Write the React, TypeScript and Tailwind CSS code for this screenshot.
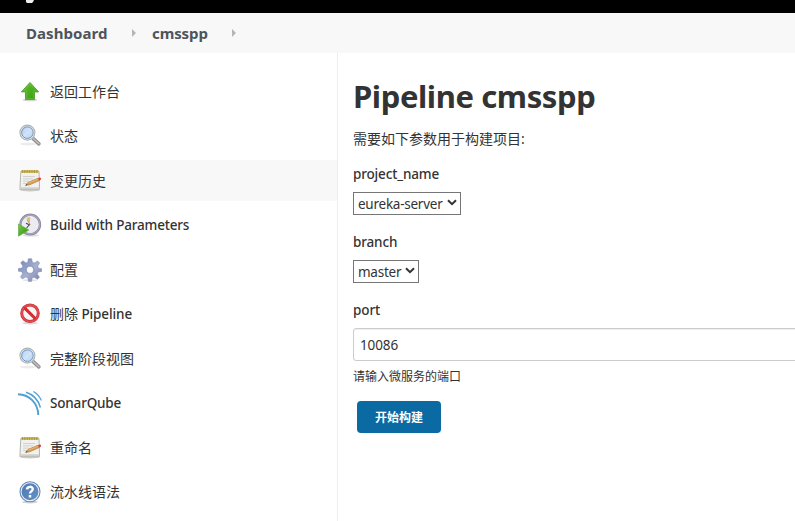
import React from "react";

function UpIcon() {
  return (
    <svg width="24" height="24" viewBox="0 0 24 24">
      <defs>
        <linearGradient id="up" x1="0" y1="0" x2="1" y2="1">
          <stop offset="0" stopColor="#6cc236" />
          <stop offset="1" stopColor="#2f9a08" />
        </linearGradient>
      </defs>
      <ellipse cx="12" cy="20" rx="7.5" ry="1.3" fill="#d4d4d4" />
      <path d="M12 2.5 20.6 11.9h-4.1v7.6h-9v-7.6H3.4Z" fill="url(#up)" stroke="#5aa438" strokeWidth="1" strokeLinejoin="round" />
      <path d="M12 4 18 10.8h-2.7v7.7H8.7v-7.7H5.7Z" fill="none" stroke="#91d864" strokeWidth=".6" opacity=".5" />
    </svg>
  );
}

function SearchIcon() {
  return (
    <svg width="24" height="24" viewBox="0 0 24 24">
      <defs>
        <linearGradient id="lens" x1="0" y1="0" x2="1" y2="1">
          <stop offset="0" stopColor="#a2c3ea" />
          <stop offset=".5" stopColor="#d2e4f7" />
          <stop offset="1" stopColor="#b3d1f0" />
        </linearGradient>
      </defs>
      <ellipse cx="10" cy="20" rx="8" ry="1.5" fill="#ececec" />
      <path d="m15.2 14.7 5.7 5.2" stroke="#8d8d8d" strokeWidth="3.6" strokeLinecap="round" />
      <path d="m15.2 14.5 5.7 5.2" stroke="#c1c1c1" strokeWidth="1.5" strokeLinecap="round" />
      <circle cx="9.4" cy="8.6" r="7.5" fill="#eeeeec" stroke="#b2b4b2" strokeWidth="1.1" />
      <circle cx="9.4" cy="8.6" r="5.8" fill="url(#lens)" stroke="#6c94c8" strokeWidth="1" />
      <path d="M5.2 7.8c.8-3 4-4.6 7-3-3.2.2-4.7 2-7 3Z" fill="#dbe9f8" opacity=".6" />
    </svg>
  );
}

function NotepadIcon() {
  return (
    <svg width="24" height="24" viewBox="0 0 24 24">
      <ellipse cx="12" cy="21.2" rx="9.5" ry="1.3" fill="#cccccc" />
      <path d="M2.8 2.5h18.2l.6 18.1H1.9Z" fill="#f1f1ef" stroke="#b4b4b0" strokeWidth="1" strokeLinejoin="round" />
      <path d="M2.4 18.2h18.8l.1 2H2.3Z" fill="#cfcfcc" />
      <path d="M3.5 1.2h17v2.6h-17Z" fill="#c9b44a" />
      <path d="M4.4 1v3M6.8 1v3M9.2 1v3M11.6 1v3M14 1v3M16.4 1v3M18.8 1v3" stroke="#a18d35" strokeWidth=".8" />
      <path d="M5 7.5h12M5 9.8h10M5 12.1h6M5 14.4h4" stroke="#c9c9c6" strokeWidth=".8" />
      <path d="m7.5 16.4 2.5-3 10-4.2 1.2 2.4-9.5 4.2Z" fill="#dc9b4a" stroke="#a2723a" strokeWidth=".6" />
      <path d="m10.7 14.1 9.6-4" stroke="#efbd78" strokeWidth=".8" />
      <path d="m7.5 16.4 1.2-1.5.9 1.1Z" fill="#444444" />
      <path d="m20 9.2 1.7-.7c1.4-.1 1.9 1.6.8 2.4l-1.4.7Z" fill="#dd4434" />
    </svg>
  );
}

function ClockIcon() {
  return (
    <svg width="24" height="24" viewBox="0 0 24 24">
      <defs>
        <linearGradient id="play" x1="0" y1="0" x2="1" y2="1">
          <stop offset="0" stopColor="#7bcb48" />
          <stop offset="1" stopColor="#239006" />
        </linearGradient>
      </defs>
      <ellipse cx="13" cy="22.4" rx="8" ry="1.2" fill="#dddddd" />
      <circle cx="12.2" cy="11.5" r="9.8" fill="#ecebef" stroke="#8d8ba3" strokeWidth="2.3" />
      <circle cx="12.2" cy="11.5" r="9.6" fill="none" stroke="#b3b1c6" strokeWidth=".8" />
      <path d="M11.8 10.6 8.3 5.5c1.2-1.1 3-1.3 3.9-1.1Z" fill="#dec177" />
      <path d="m8 10.2 3.4 1.6L8.6 15" fill="none" stroke="#44474b" strokeWidth="1.1" />
      <path d="m9.3 7 2.9 4.8" stroke="#a48e55" strokeWidth=".8" />
      <path d="M.5 11 10.8 17 .5 23.2Z" fill="url(#play)" stroke="#65a94a" strokeWidth=".7" />
    </svg>
  );
}

function GearIcon() {
  return (
    <svg width="24" height="24" viewBox="0 0 24 24">
      <defs>
        <linearGradient id="gear" x1="0" y1="0" x2="1" y2="1">
          <stop offset="0" stopColor="#6d82b5" />
          <stop offset=".55" stopColor="#a8b1d1" />
          <stop offset="1" stopColor="#7479a4" />
        </linearGradient>
      </defs>
      <ellipse cx="12" cy="22.3" rx="7" ry="1" fill="#e2e2e2" />
      <path fillRule="evenodd" d="M10.3.7h3.4l.7 3.6 2 .8 3.2-2.2 2.1 2.2-2 3.1.8 2 3.2.5v2.7l-3.5.6-.9 2 2.2 3.3-2.2 2-3.2-2.1-1.9.8-.7 3.4h-3l-.7-3.6-2-.8L4.5 21l-2-2.1 2.1-3.2-.8-1.9-3.5-.6v-2.6L4 10l.8-2L2.7 4.8l2.2-2.1L8 4.9l1.8-.8ZM12 8.2a3.6 3.6 0 1 0 0 7.2 3.6 3.6 0 0 0 0-7.2Z" fill="url(#gear)" stroke="#8089b1" strokeWidth=".5" />
      <circle cx="12" cy="11.8" r="4.2" fill="none" stroke="#8493bd" strokeWidth=".8" />
    </svg>
  );
}

function StopIcon() {
  return (
    <svg width="24" height="24" viewBox="0 0 24 24">
      <ellipse cx="12" cy="21.1" rx="8" ry="1.3" fill="#d8d8d8" />
      <circle cx="12" cy="11.3" r="8.3" fill="#f6f6f5" stroke="#cb3439" strokeWidth="3" />
      <path d="m6.3 5.6 11.4 11.4" stroke="#cf2027" strokeWidth="3" />
      <circle cx="12" cy="11.3" r="8.3" fill="none" stroke="#e04b4f" strokeWidth="1.8" />
      <path d="m6 5.3 12 12" stroke="#de3034" strokeWidth="1.6" />
    </svg>
  );
}

function SonarIcon() {
  return (
    <svg width="24" height="24" viewBox="0 0 24 24" fill="none" stroke="#4f9fd3">
      <path d="M0 3.2C11 3.3 20 12 20.3 24" strokeWidth="1.9" />
      <path d="M8 1.2C14.5 3 20.4 8.8 22.4 16.5" strokeWidth="1.5" />
      <path d="M15.4.5c3.3 1.9 6.2 4.9 8 8.9" strokeWidth="1.2" />
    </svg>
  );
}

function HelpIcon() {
  return (
    <svg width="24" height="24" viewBox="0 0 24 24">
      <defs>
        <linearGradient id="help" x1="0" y1="0" x2="1" y2="1">
          <stop offset="0" stopColor="#4f7ab3" />
          <stop offset="1" stopColor="#6590c4" />
        </linearGradient>
      </defs>
      <ellipse cx="12" cy="22" rx="8" ry="1.4" fill="#d4d4d4" />
      <circle cx="12" cy="11.8" r="10" fill="#f5f7fa" stroke="#6388b8" strokeWidth="1.1" />
      <circle cx="12" cy="11.8" r="8.5" fill="url(#help)" />
      <path d="M9 9.4C9.2 6 15 6 14.7 9.2c-.1 2.2-2.7 2.1-2.7 4.2M12 15.1v2.3" fill="none" stroke="#ffffff" strokeWidth="2.4" />
    </svg>
  );
}

const tasks = [
  { label: "返回工作台", icon: UpIcon },
  { label: "状态", icon: SearchIcon },
  { label: "变更历史", icon: NotepadIcon, active: true },
  { label: "Build with Parameters", icon: ClockIcon, latin: true },
  { label: "配置", icon: GearIcon },
  { label: "删除", suffix: "Pipeline", icon: StopIcon },
  { label: "完整阶段视图", icon: SearchIcon },
  { label: "SonarQube", icon: SonarIcon, latin: true },
  { label: "重命名", icon: NotepadIcon },
  { label: "流水线语法", icon: HelpIcon },
];

function Crumb() {
  return (
    <svg className="shrink-0" width="4" height="8" viewBox="0 0 4 8">
      <path d="M0 0 4 4 0 8Z" fill="#b5b5b5" />
    </svg>
  );
}

function Select({ value, className }: { value: string; className: string }) {
  return (
    <button className={`flex h-[23px] items-center justify-between border border-[#767676] bg-white pl-1 pr-[3px] ${className}`}>
      <span className="whitespace-nowrap pt-px text-[13.5px] leading-5 tracking-[-0.25px]">{value}</span>
      <svg width="10" height="7" viewBox="0 0 10 7" className="mb-0.5 shrink-0">
        <path d="m1 1.2 4 4 4-4" fill="none" stroke="#333333" strokeWidth="2" />
      </svg>
    </button>
  );
}

export default function App() {
  return (
    <div className="flex h-[521px] w-[795px] flex-col overflow-hidden bg-white font-['Noto_Sans','Noto_Sans_CJK_SC',sans-serif] text-sm text-[#333333]">
      <header className="h-[13px] shrink-0 bg-black pl-[26px]">
        <svg width="8" height="4" viewBox="0 0 8 4">
          <path d="M0 0h8L7 2 6 3H1L0 2Z" fill="#eeeeee" />
        </svg>
      </header>
      <nav className="flex h-10 shrink-0 items-center bg-[#f8f8f8] pl-[26px] text-[15px] font-bold text-[#4d545d]">
        <span className="w-[106px] whitespace-nowrap pt-px tracking-[0.05px]">Dashboard</span>
        <Crumb />
        <span className="ml-4 w-20 whitespace-nowrap pt-px tracking-[-0.1px]">cmsspp</span>
        <Crumb />
      </nav>
      <div className="flex min-h-0 flex-1">
        <aside className="flex w-[338px] shrink-0 flex-col gap-[3.5px] border-r border-[#eeeeee] pt-[18px]">
          {tasks.map(({ label, suffix, icon: Icon, active, latin }) => (
            <a key={label} className={`flex h-[41px] shrink-0 items-center gap-2 pl-[18px] ${active ? "bg-[#f8f8f8]" : ""}`}>
              <Icon />
              <span className={`whitespace-nowrap ${latin ? "text-[13.5px] font-medium leading-5 tracking-[-0.18px]" : ""}`}>
                {label}
                {suffix && <span className="text-[13.5px] font-medium tracking-[-0.1px]"> {suffix}</span>}
              </span>
            </a>
          ))}
        </aside>
        <main className="flex min-w-0 flex-1 flex-col items-start pl-[15px] pt-[21px]">
          <h1 className="h-11 whitespace-nowrap text-[31px] font-bold leading-[44px] tracking-[-0.4px]">Pipeline cmsspp</h1>
          <p className="mt-[11px] h-5 whitespace-nowrap leading-5">需要如下参数用于构建项目:</p>
          <label className="mt-[15px] h-5 text-[13.5px] font-medium leading-5 tracking-[-0.15px]">project_name</label>
          <Select value="eureka-server" className="mt-2 w-[108px]" />
          <label className="mt-[17px] h-5 text-[13.5px] font-medium leading-5 tracking-[-0.15px]">branch</label>
          <Select value="master" className="mt-2 w-[66px]" />
          <label className="mt-[17px] h-5 text-[13.5px] font-medium leading-5 tracking-[-0.1px]">port</label>
          <div className="mt-2 flex h-[33px] w-[460px] shrink-0 items-center rounded-[3px] border border-[#cccccc] pl-1.5 text-[13.5px] leading-5 tracking-[-0.1px] shadow-[inset_0_1px_1px_#eeeeee]">10086</div>
          <p className="mt-[6px] h-5 whitespace-nowrap text-xs leading-5">请输入微服务的端口</p>
          <button className="ml-1 mt-[14px] h-8 w-[84px] rounded bg-[#0b6aa2] pt-px text-xs font-bold text-white">开始构建</button>
        </main>
      </div>
    </div>
  );
}
